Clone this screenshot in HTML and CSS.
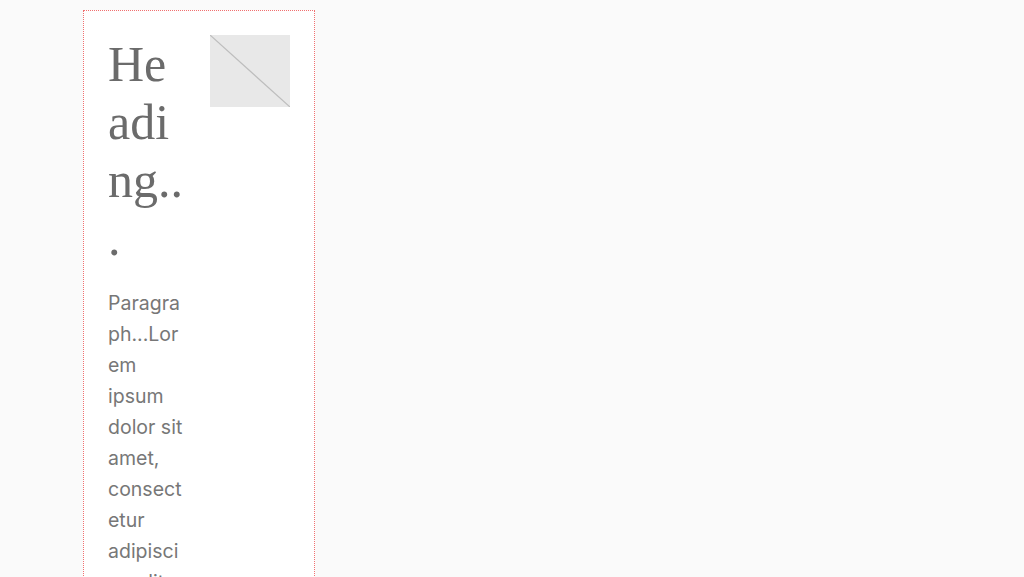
FILE: index.html
```html
<!DOCTYPE html>
<html>
<head>
<meta charset="utf-8">
<link rel="stylesheet" href="styles.css">
</head>
<body>
<div class="page">
  <div class="card">
    <div class="text">
      <h1 class="heading">Heading...</h1>
      <p class="para">Paragraph...Lorem ipsum dolor sit amet, consectetur adipiscing elit, sed do eiusmod tempor incididunt ut labore et dolore magna aliqua.</p>
    </div>
    <div class="thumb">
      <svg width="80" height="72" viewBox="0 0 80 72" preserveAspectRatio="none">
        <rect x="0" y="0" width="80" height="72" fill="#e8e8e8"/>
        <line x1="0" y1="0" x2="80" y2="72" stroke="#bdbdbd" stroke-width="1.2"/>
      </svg>
    </div>
  </div>
</div>
</body>
</html>
```
FILE: styles.css
```css
html, body {
  margin: 0;
  padding: 0;
  background: #fafafa;
  height: 100%;
  overflow: hidden;
}
.page {
  padding: 10px 0 0 83px;
}
.card {
  width: 182px;
  min-height: 700px;
  background: #ffffff;
  border: 1px dotted #f07070;
  padding: 24px;
  display: flex;
  gap: 24px;
  align-items: flex-start;
}
.text {
  width: 78px;
  flex: 0 0 78px;
}
.heading {
  margin: 0 0 21px 0;
  font-family: "Liberation Serif", serif;
  font-weight: normal;
  font-size: 50px;
  line-height: 58px;
  color: #6b6b6b;
  overflow-wrap: anywhere;
}
.para {
  margin: 0;
  font-family: Inter, "Noto Sans", sans-serif;
  font-size: 19.5px;
  line-height: 31px;
  color: #777777;
  overflow-wrap: anywhere;
}
.thumb {
  flex: 0 0 80px;
  display: flex;
}
.thumb svg {
  display: block;
}
```
